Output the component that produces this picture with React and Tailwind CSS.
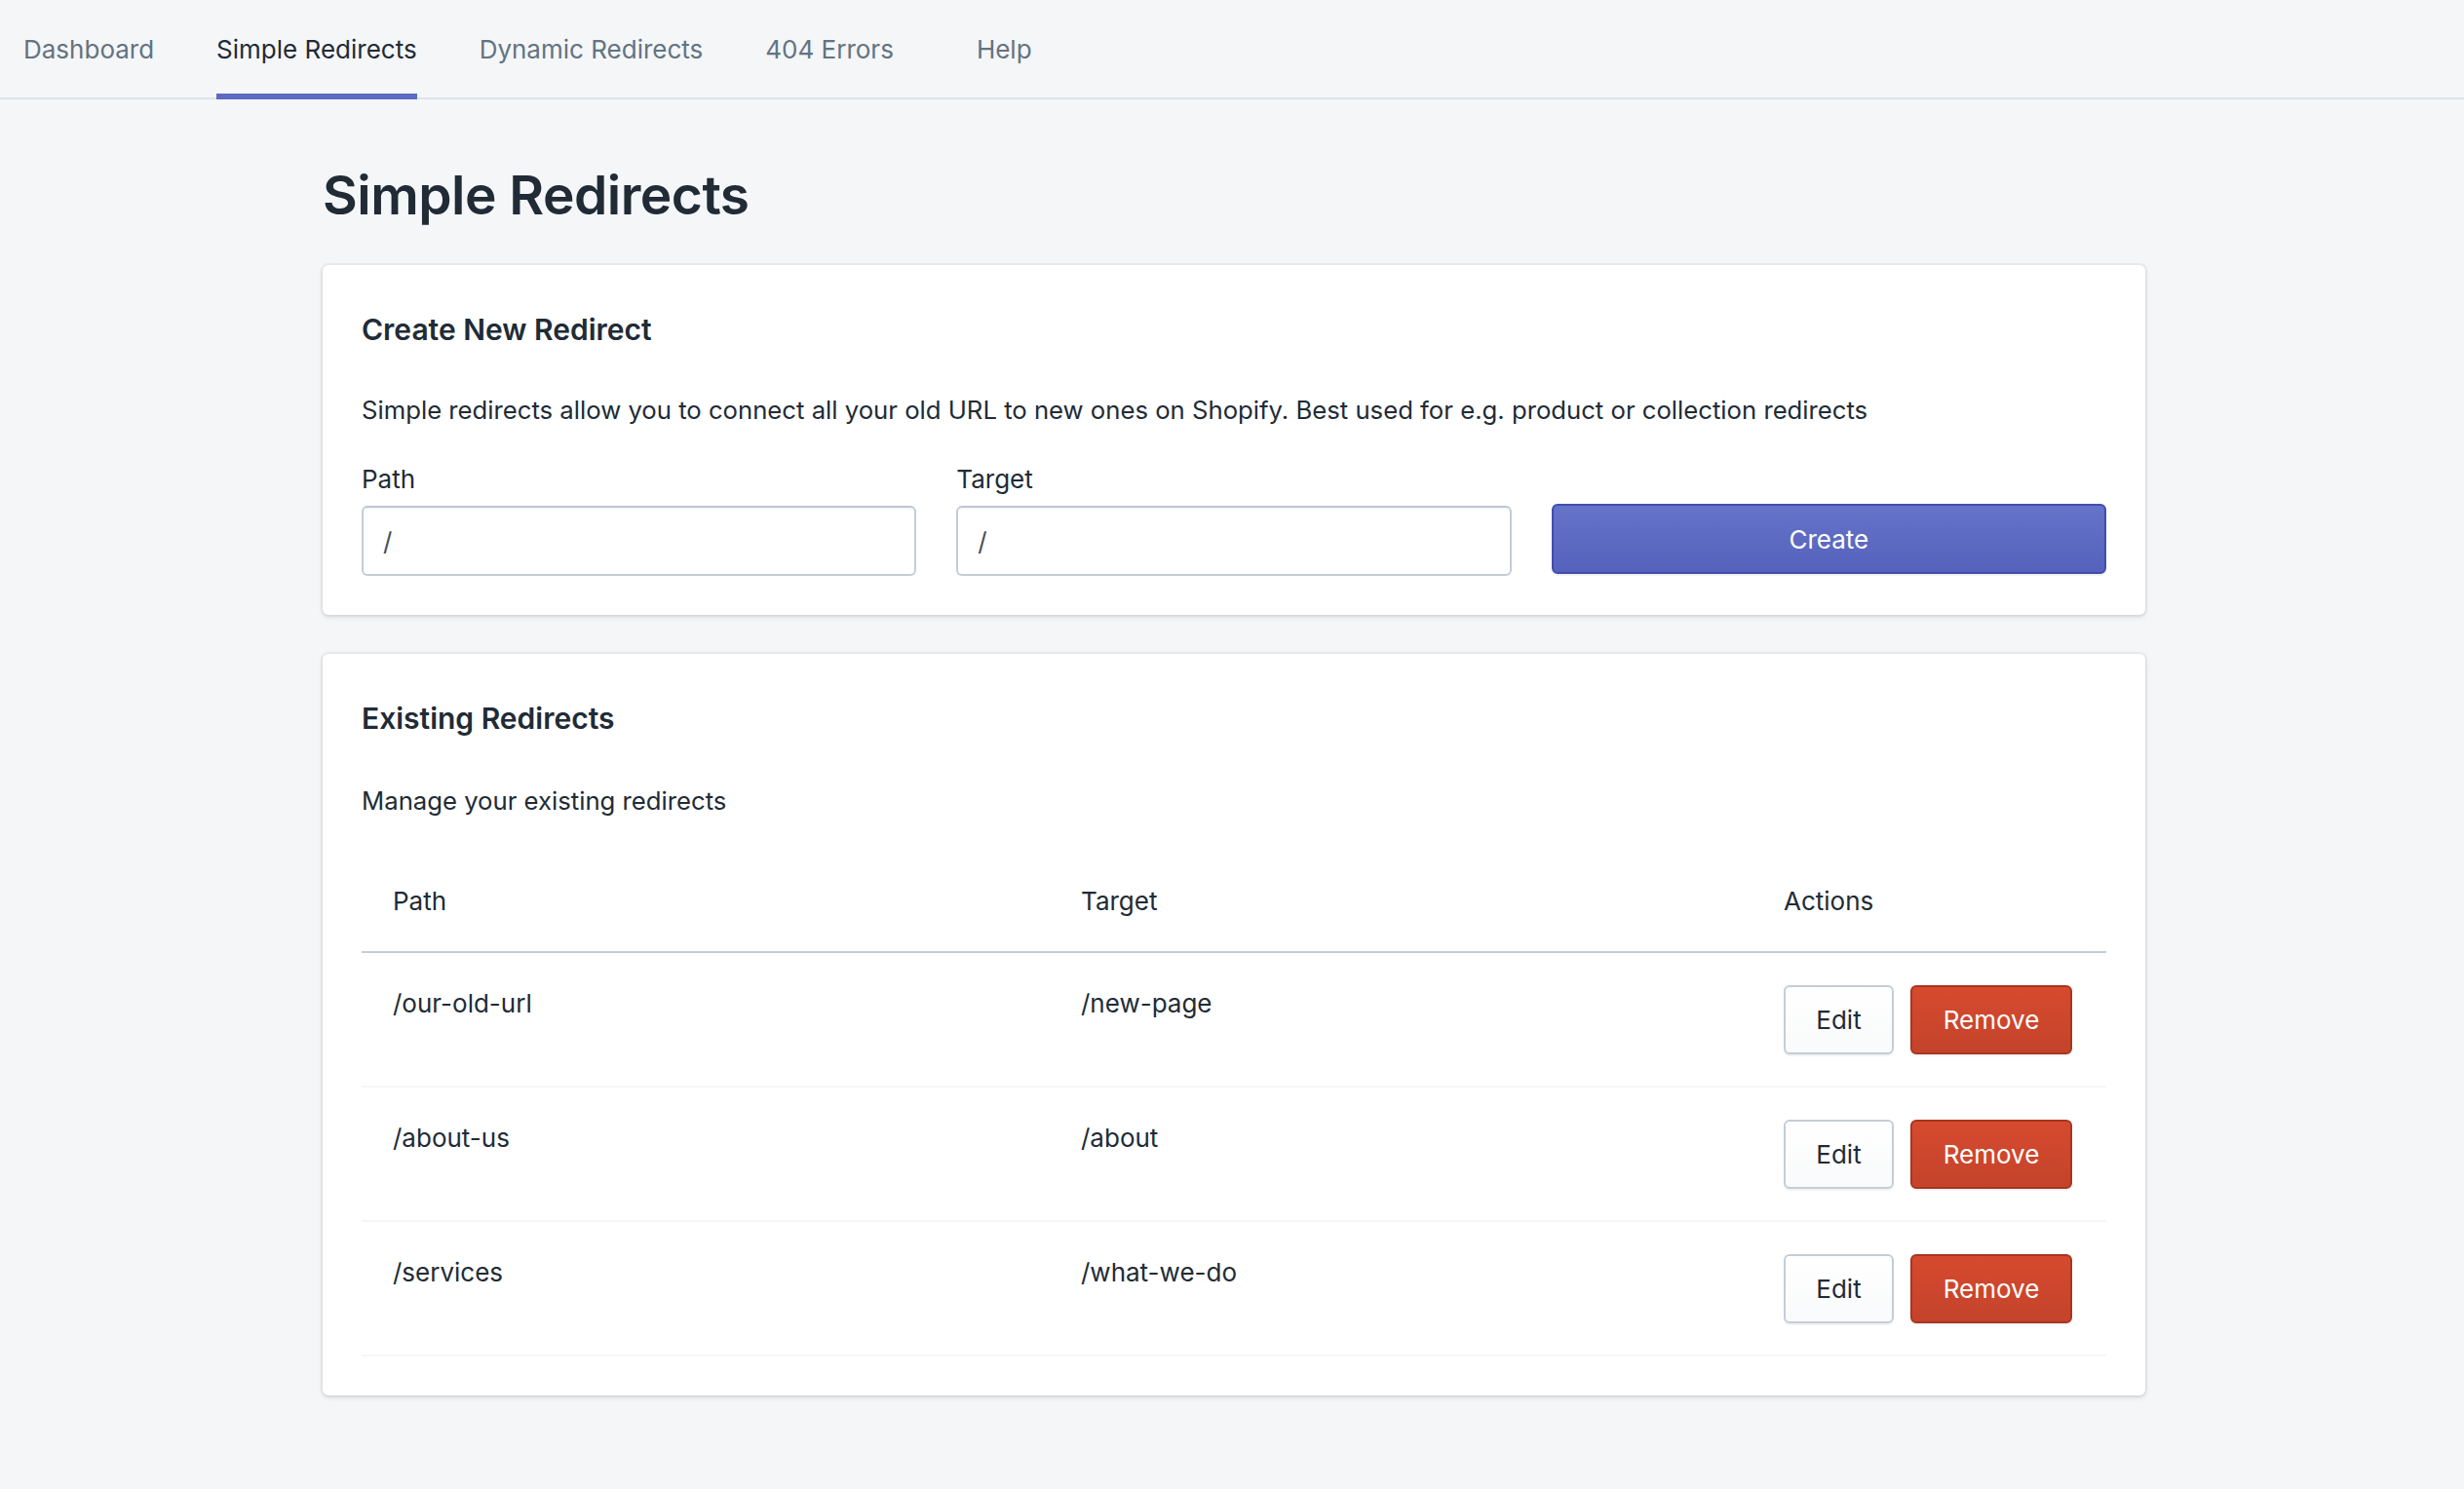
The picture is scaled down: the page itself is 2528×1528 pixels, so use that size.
import React from "react";

const navItems = [
  { label: "Dashboard", active: false },
  { label: "Simple Redirects", active: true },
  { label: "Dynamic Redirects", active: false },
  { label: "404 Errors", active: false },
];

const redirects = [
  { path: "/our-old-url", target: "/new-page" },
  { path: "/about-us", target: "/about" },
  { path: "/services", target: "/what-we-do" },
];

function Card({ title, children }) {
  return (
    <div className="rounded-[6px] bg-white px-[40px] pt-[46px] pb-[40px] shadow-[0_0_0_2px_rgba(63,63,68,0.05),0_2px_5px_rgba(63,63,68,0.15)]">
      <h2 className="text-[30px] font-semibold leading-[40px] text-[#212b36]">{title}</h2>
      {children}
    </div>
  );
}

function Field({ label }) {
  return (
    <div className="flex flex-col">
      <label className="text-[26px] leading-[38px] text-[#212b36]">{label}</label>
      <div className="mt-[8px] flex h-[72px] items-center rounded-[6px] border-2 border-[#c4cdd5] border-t-[#bcc5cf] bg-white px-[20px] text-[26px] text-[#454f5b] shadow-[inset_0_2px_0_rgba(99,115,129,0.05)]">
        /
      </div>
    </div>
  );
}

export default function App() {
  return (
    <div className="min-h-[1528px] bg-[#f4f6f8] font-['Inter',sans-serif] text-[#212b36]">
      <nav className="flex h-[102px] items-stretch border-b-2 border-[#dfe3e8] pl-[24px]">
        <div className="flex items-stretch gap-[64px]">
          {navItems.map((item) => (
            <a
              key={item.label}
              className={
                "relative flex items-center text-[26px] " +
                (item.active ? "text-[#212b36]" : "text-[#637381]")
              }
            >
              {item.label}
              {item.active && (
                <span className="absolute bottom-[-2px] left-0 right-0 h-[6px] bg-[#5c6ac4]" />
              )}
            </a>
          ))}
          <a className="ml-[21px] flex items-center text-[26px] text-[#637381]">Help</a>
        </div>
      </nav>

      <main className="ml-[331px] w-[1870px] pt-[66px] pb-[96px]">
        <h1 className="text-[55px] font-semibold leading-[64px] tracking-[-0.5px] text-[#212b36]">
          Simple Redirects
        </h1>

        <div className="mt-[40px] flex flex-col gap-[40px]">
          <Card title="Create New Redirect">
            <p className="mt-[44px] text-[25.7px] leading-[38px] text-[#212b36]">
              Simple redirects allow you to connect all your old URL to new ones on Shopify. Best used for e.g. product or collection redirects
            </p>
            <div className="mt-[33px] grid grid-cols-3 items-end gap-[41px]">
              <Field label="Path" />
              <Field label="Target" />
              <button
                type="button"
                className="mb-[2px] h-[72px] rounded-[6px] border-2 border-[#3f4eae] bg-gradient-to-b from-[#6573c8] to-[#5562bc] text-[26px] text-white shadow-[0_2px_0_rgba(22,29,37,0.05)]"
              >
                Create
              </button>
            </div>
          </Card>

          <Card title="Existing Redirects">
            <p className="mt-[46px] text-[25.7px] leading-[38px] text-[#212b36]">
              Manage your existing redirects
            </p>
            <div className="mt-[33px]">
              <div className="grid grid-cols-[706px_721px_1fr] border-b-2 border-[#c4cdd5] text-[26px] leading-[38px]">
                <div className="px-[32px] py-[32px]">Path</div>
                <div className="px-[32px] py-[32px]">Target</div>
                <div className="px-[32px] py-[32px]">Actions</div>
              </div>
              {redirects.map((r) => (
                <div
                  key={r.path}
                  className="grid grid-cols-[706px_721px_1fr] border-b-2 border-[#f4f6f8] text-[26px] leading-[38px]"
                >
                  <div className="px-[32px] pt-[33px]">{r.path}</div>
                  <div className="px-[32px] pt-[33px]">{r.target}</div>
                  <div className="flex items-center gap-[17px] px-[32px] pt-[33px] pb-[32px]">
                    <button
                      type="button"
                      className="h-[71px] w-[113px] rounded-[6px] border-2 border-[#c4cdd5] bg-gradient-to-b from-white to-[#f9fafb] text-[26px] text-[#212b36] shadow-[0_2px_0_rgba(22,29,37,0.05)]"
                    >
                      Edit
                    </button>
                    <button
                      type="button"
                      className="h-[71px] w-[166px] rounded-[6px] border-2 border-[#a8361f] bg-gradient-to-b from-[#d64a2f] to-[#c4432b] text-[26px] text-white shadow-[0_2px_0_rgba(22,29,37,0.05)]"
                    >
                      Remove
                    </button>
                  </div>
                </div>
              ))}
            </div>
          </Card>
        </div>
      </main>
    </div>
  );
}
